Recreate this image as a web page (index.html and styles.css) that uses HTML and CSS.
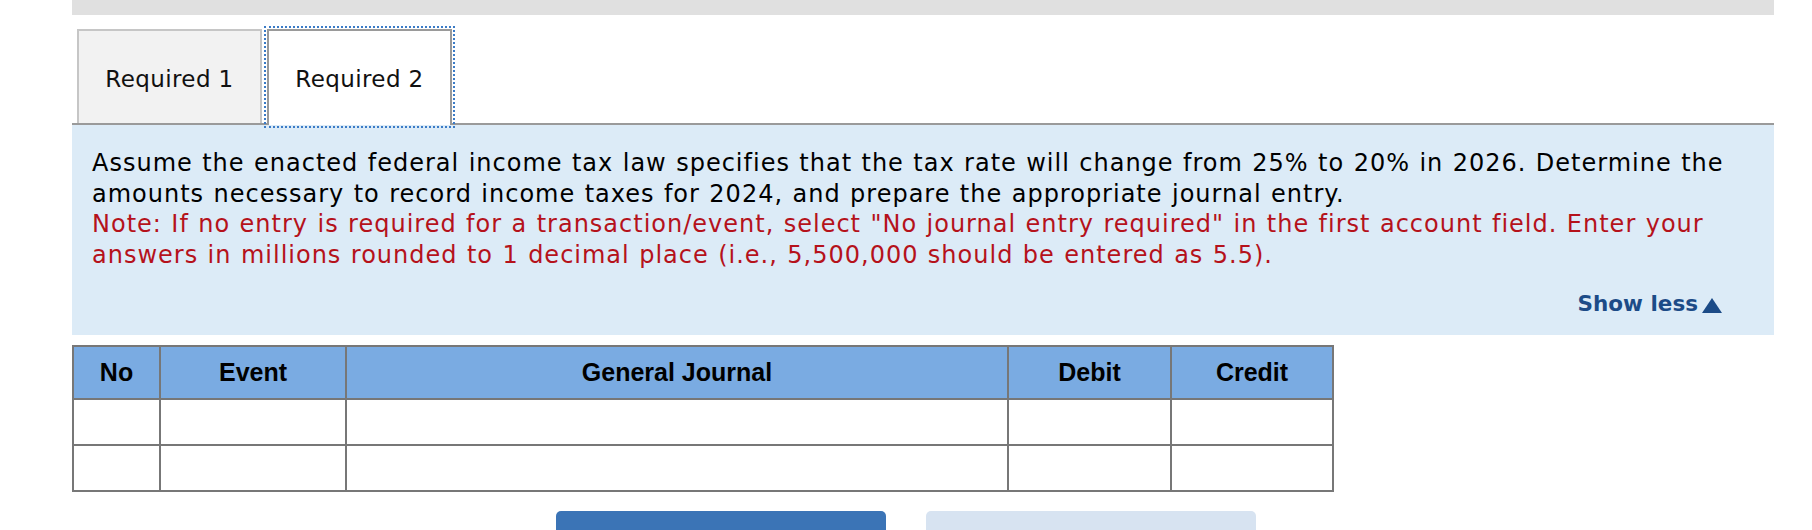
FILE: index.html
```html
<!DOCTYPE html>
<html lang="en">
<head>
<meta charset="utf-8">
<title>Required 2</title>
<link rel="stylesheet" href="styles.css">
</head>
<body>
<div class="page">
  <div class="topbar"></div>
  <div class="tabs">
    <div class="tab">Required 1</div>
    <div class="tab active">Required 2</div>
  </div>
  <div class="panel">
    <p class="question">Assume the enacted federal income tax law specifies that the tax rate will change from 25% to 20% in 2026. Determine the amounts necessary to record income taxes for 2024, and prepare the appropriate journal entry.</p>
    <p class="note">Note: If no entry is required for a transaction/event, select "No journal entry required" in the first account field. Enter your answers in millions rounded to 1 decimal place (i.e., 5,500,000 should be entered as 5.5).</p>
    <div class="toggle-row">
      <span class="toggle">Show less<svg class="tri" width="20" height="15" viewBox="0 0 20 15"><polygon points="10,0 20,15 0,15" fill="#1c4b87"/></svg></span>
    </div>
  </div>
  <table class="journal">
    <thead>
      <tr>
        <th class="c-no">No</th>
        <th class="c-event">Event</th>
        <th class="c-gj">General Journal</th>
        <th class="c-debit">Debit</th>
        <th class="c-credit">Credit</th>
      </tr>
    </thead>
    <tbody>
      <tr><td></td><td></td><td></td><td></td><td></td></tr>
      <tr><td></td><td></td><td></td><td></td><td></td></tr>
    </tbody>
  </table>
</div>
<div class="buttons">
  <div class="btn btn-primary"></div>
  <div class="btn btn-secondary"></div>
</div>
</body>
</html>
```

FILE: styles.css
```css
html, body {
  margin: 0;
  padding: 0;
  overflow: hidden;
  background: #ffffff;
}

body {
  font-family: "DejaVu Sans", Verdana, sans-serif;
  color: #000;
}

.page {
  margin-left: 72px;
  width: 1702px;
}

.topbar {
  height: 15px;
  background: #e0e0e0;
}

.tabs {
  display: flex;
  gap: 5px;
  padding-left: 5px;
  margin-top: 14px;
  border-bottom: 2px solid #9a9a9a;
  height: 94px;
}

.tab {
  box-sizing: border-box;
  width: 185px;
  height: 94px;
  display: flex;
  align-items: center;
  justify-content: center;
  padding-top: 3px;
  font-size: 23px;
  letter-spacing: 0.4px;
  color: #111;
  background: #f2f2f2;
  border: 2px solid #c6c6c6;
  border-bottom: none;
}

.tab.active {
  height: 96px;
  padding-top: 1px;
  background: #ffffff;
  border-color: #9a9a9a;
  outline: 2px dotted #3b7bc6;
  outline-offset: 1px;
  position: relative;
}

.panel {
  background: #dcebf7;
  padding: 23px 38px 0 20px;
  height: 187px;
  font-size: 24px;
  line-height: 30.5px;
  letter-spacing: 1px;
  word-spacing: 0.8px;
}

.panel p {
  margin: 0;
}

.note {
  color: #b5121b;
}

.toggle-row {
  display: flex;
  justify-content: flex-end;
  margin-top: 19px;
  letter-spacing: 0;
  word-spacing: 0;
  padding-right: 14px;
}

.toggle {
  display: inline-flex;
  align-items: baseline;
  gap: 4px;
  font-weight: bold;
  font-size: 21.5px;
  color: #1c4b87;
}

.tri {
  align-self: center;
  margin-top: 2px;
}

.journal {
  margin-top: 10px;
  border-collapse: collapse;
  table-layout: fixed;
  font-family: "Liberation Sans", Arial, sans-serif;
}

.journal th,
.journal td {
  border: 2px solid #777777;
  padding: 0;
}

.journal th {
  background: #7aabe2;
  height: 51px;
  font-size: 25px;
  font-weight: bold;
  text-align: center;
  color: #000;
}

.journal td {
  height: 44px;
  background: #ffffff;
}

.c-no { width: 85px; }
.c-event { width: 184px; }
.c-gj { width: 660px; }
.c-debit { width: 161px; }
.c-credit { width: 160px; }

.buttons {
  display: flex;
  justify-content: center;
  gap: 40px;
  margin-top: 19px;
}

.btn {
  width: 330px;
  height: 50px;
  border-radius: 5px;
}

.btn-primary {
  background: #3b74b6;
}

.btn-secondary {
  background: #d7e3f1;
}
```
